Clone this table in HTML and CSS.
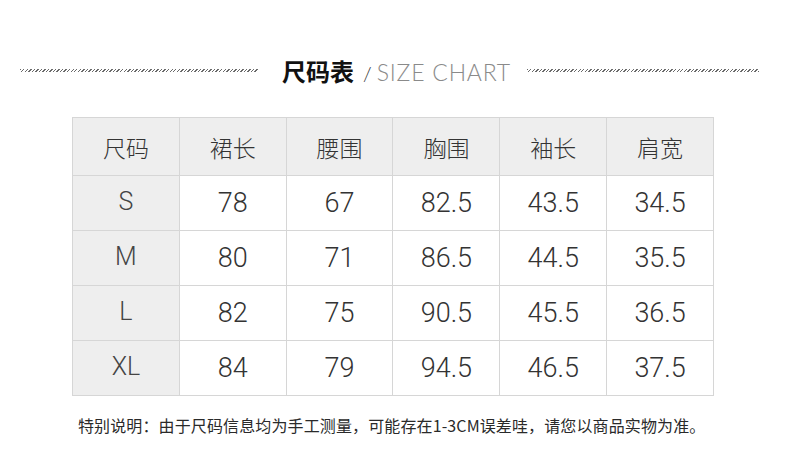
FILE: index.html
```html
<!DOCTYPE html>
<html lang="zh-CN">
<head>
<meta charset="utf-8">
<title>尺码表</title>
<link rel="stylesheet" href="styles.css">
</head>
<body>
<div class="page">
  <div class="title-row">
    <span class="hatch hatch-left"></span>
    <h1 class="title"><span class="title-cn">尺码表</span><span class="title-slash">/</span><span class="title-en">SIZE CHART</span></h1>
    <span class="hatch hatch-right"></span>
  </div>
  <table class="chart">
    <thead>
      <tr><th>尺码</th><th>裙长</th><th>腰围</th><th>胸围</th><th>袖长</th><th>肩宽</th></tr>
    </thead>
    <tbody>
      <tr><th>S</th><td>78</td><td>67</td><td>82.5</td><td>43.5</td><td>34.5</td></tr>
      <tr><th>M</th><td>80</td><td>71</td><td>86.5</td><td>44.5</td><td>35.5</td></tr>
      <tr><th>L</th><td>82</td><td>75</td><td>90.5</td><td>45.5</td><td>36.5</td></tr>
      <tr><th>XL</th><td>84</td><td>79</td><td>94.5</td><td>46.5</td><td>37.5</td></tr>
    </tbody>
  </table>
  <p class="note">特别说明：由于尺码信息均为手工测量，可能存在1-3CM误差哇，请您以商品实物为准。</p>
</div>
</body>
</html>
```
FILE: styles.css
```css
html, body {
  margin: 0;
  padding: 0;
  background: #fff;
}
.page {
  width: 790px;
  height: 471px;
  font-family: "Liberation Sans", "Noto Sans CJK SC", sans-serif;
  color: #333;
  padding-top: 50px;
  box-sizing: border-box;
}
.title-row {
  display: flex;
  align-items: center;
  height: 40px;
  padding-left: 20px;
}
.hatch {
  display: block;
  height: 3px;
  background: repeating-linear-gradient(135deg, #6a6a6a 0 1px, transparent 1px 2.5px);
}
.hatch-left { width: 238px; margin-right: 24px; }
.hatch-right { width: 232px; margin-left: 16px; }
.title {
  margin: 0;
  display: flex;
  align-items: baseline;
  font-weight: normal;
  white-space: nowrap;
}
.title-cn {
  font-family: "Noto Sans CJK SC", sans-serif;
  font-size: 24px;
  font-weight: 700;
  color: #111;
}
.title-slash {
  font-family: "Lato", sans-serif;
  font-weight: 300;
  font-size: 20px;
  color: #333;
  margin: 0 5px 0 9px;
}
.title-en {
  font-family: "Lato", sans-serif;
  font-weight: 300;
  font-size: 23px;
  letter-spacing: 0.8px;
  color: #8a8a8a;
}
.chart {
  margin: 27px 0 0 72px;
  width: 642px;
  table-layout: fixed;
  border-collapse: collapse;
}
.chart th, .chart td {
  border: 1px solid #d6d6d6;
  text-align: center;
  padding: 0;
  font-weight: normal;
}
.chart thead th {
  height: 57px;
  background: #eeeeee;
  font-family: "Noto Sans CJK SC", sans-serif;
  font-size: 23px;
  font-weight: 300;
  color: #333;
}
.chart tbody th {
  height: 51px;
  padding-bottom: 3px;
  background: #eeeeee;
  font-family: "Roboto", "Liberation Sans", sans-serif;
  font-size: 25px;
  font-weight: 300;
  color: #444;
}
.chart tbody td {
  height: 54px;
  font-family: "Roboto", "Liberation Sans", sans-serif;
  font-size: 27px;
  font-weight: 300;
  color: #333;
}
.note {
  margin: 17px 0 0 78px;
  font-family: "Noto Sans CJK SC", sans-serif;
  font-size: 16px;
  letter-spacing: 0.12px;
  color: #2a2a2a;
}
```
